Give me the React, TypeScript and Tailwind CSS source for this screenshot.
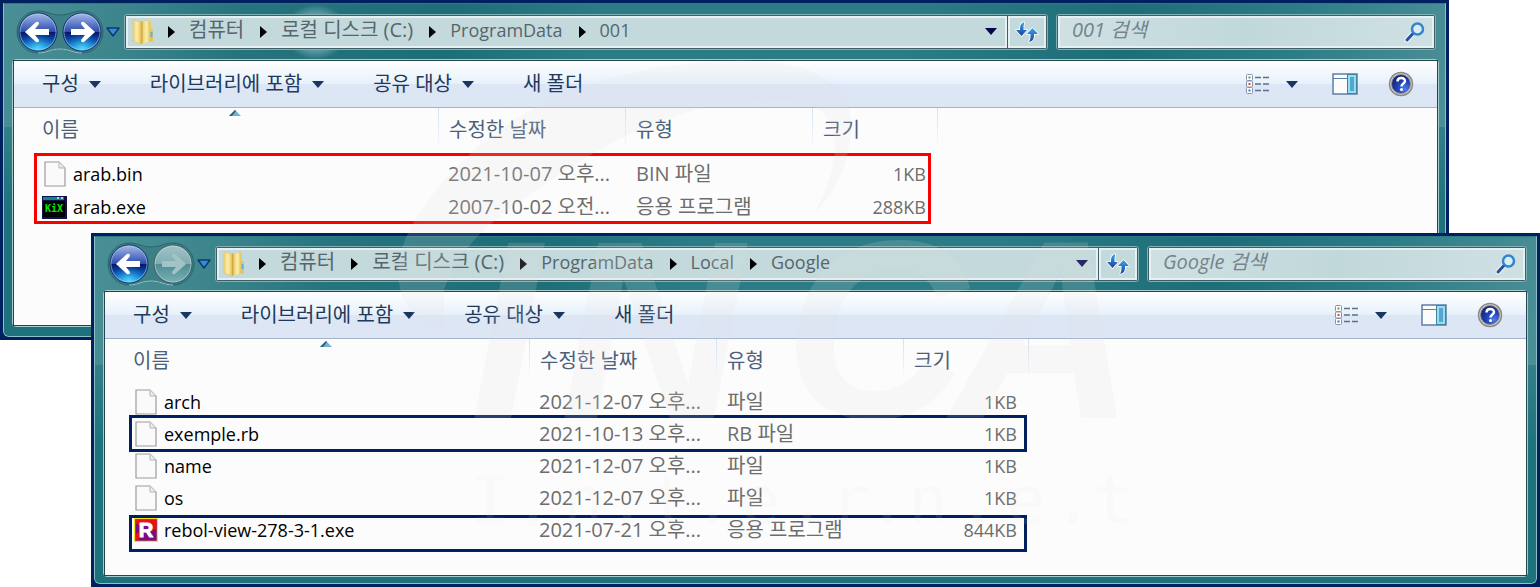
import { Fragment, useId } from "react";

type FileKind = "file" | "kix" | "rebol";

interface FileRow {
  name: string;
  date: string;
  type: string;
  size: string;
  kind: FileKind;
}

interface ExplorerProps {
  path: string[];
  canForward?: boolean;
  files: FileRow[];
  className: string;
  headerClass: string;
  headClass: string;
  rowClass: string;
  bottomClass: string;
  marks: string[];
}

const KOREAN = /[\uac00-\ud7a3]/;

const programFiles: FileRow[] = [
  { name: "arab.bin", date: "2021-10-07 오후...", type: "BIN 파일", size: "1KB", kind: "file" },
  { name: "arab.exe", date: "2007-10-02 오전...", type: "응용 프로그램", size: "288KB", kind: "kix" },
];

const googleFiles: FileRow[] = [
  { name: "arch", date: "2021-12-07 오후...", type: "파일", size: "1KB", kind: "file" },
  { name: "exemple.rb", date: "2021-10-13 오후...", type: "RB 파일", size: "1KB", kind: "file" },
  { name: "name", date: "2021-12-07 오후...", type: "파일", size: "1KB", kind: "file" },
  { name: "os", date: "2021-12-07 오후...", type: "파일", size: "1KB", kind: "file" },
  { name: "rebol-view-278-3-1.exe", date: "2021-07-21 오후...", type: "응용 프로그램", size: "844KB", kind: "rebol" },
];

function Triangle({ className = "text-[#1a3560]" }: { className?: string }) {
  return (
    <svg width="12" height="7" viewBox="0 0 12 7" className={className}>
      <path d="M0 0h12L6 7z" fill="currentColor" />
    </svg>
  );
}

function NavButtons({ canForward }: { canForward: boolean }) {
  const id = useId();
  const ball = `url(#${id}ball)`;
  const glow = `url(#${id}glow)`;
  const grey = `url(#${id}grey)`;
  const arrow = "M-13 0 L-2 -10 Q1 -11 1 -8 L-3 -3 H11 V3 H-3 L1 8 Q1 11 -2 10 Z";
  return (
    <div className="relative h-11 w-[88px] shrink-0">
      <svg width="88" height="44" viewBox="0 0 88 44" className="absolute inset-0">
        <defs>
          <linearGradient id={`${id}ball`} x1="0" y1="0" x2="0" y2="1">
            <stop offset="0" stopColor="#a9bce8" />
            <stop offset="0.3" stopColor="#5a78c8" />
            <stop offset="0.5" stopColor="#2c4ba8" />
            <stop offset="0.51" stopColor="#04186c" />
            <stop offset="0.75" stopColor="#0b55b4" />
            <stop offset="1" stopColor="#22c0f4" />
          </linearGradient>
          <radialGradient id={`${id}glow`} cx="0.5" cy="1" r="0.5">
            <stop offset="0" stopColor="#5fe6ff" stopOpacity="0.9" />
            <stop offset="1" stopColor="#1a90e0" stopOpacity="0" />
          </radialGradient>
          <linearGradient id={`${id}grey`} x1="0" y1="0" x2="0" y2="1">
            <stop offset="0" stopColor="#a3c3c7" />
            <stop offset="0.5" stopColor="#7fadb2" />
            <stop offset="0.51" stopColor="#4f8d93" />
            <stop offset="1" stopColor="#79b1b5" />
          </linearGradient>
        </defs>
        <path d="M22 1 C32 1 34 5 44 5 C54 5 56 1 66 1 A21 21 0 0 1 66 43 C56 43 54 39 44 39 C34 39 32 43 22 43 A21 21 0 0 1 22 1z" fill="#3d7f86" stroke="#2b666d" strokeWidth="1" />
        <path d="M22 43 C32 43 34 39 44 39 C54 39 56 43 66 43" fill="none" stroke="#9cc4c8" strokeWidth="1" />
        <g transform="translate(22 22)">
          <circle r="19" fill={ball} stroke="#142c66" strokeWidth="1" />
          <circle r="18" fill={glow} />
          <circle r="18" fill="none" stroke="#b9cdf0" strokeOpacity="0.6" />
          <path d={arrow} fill="#fff" />
        </g>
        <g transform="translate(66 22)">
          <circle r="19" fill={canForward ? ball : grey} stroke={canForward ? "#142c66" : "#36595d"} strokeWidth="1" />
          {canForward && <circle r="18" fill={glow} />}
          <circle r="18" fill="none" stroke={canForward ? "#b9cdf0" : "#c4dadc"} strokeOpacity="0.6" />
          <path d={arrow} transform="scale(-1 1)" fill={canForward ? "#fff" : "#a3c4c7"} />
        </g>
      </svg>
      <div className="relative flex h-full">
        <button aria-label="뒤로" className="flex-1 rounded-full" />
        <button aria-label="앞으로" className="flex-1 rounded-full" disabled={!canForward} />
      </div>
    </div>
  );
}

function FolderIcon() {
  const id = useId();
  return (
    <svg width="22" height="26" viewBox="0 0 22 26" className="shrink-0">
      <defs>
        <linearGradient id={id} x1="0" y1="0" x2="1" y2="0">
          <stop offset="0" stopColor="#edd277" />
          <stop offset="0.5" stopColor="#fbeea9" />
          <stop offset="1" stopColor="#e6c35c" />
        </linearGradient>
      </defs>
      <path d="M9 3 L17 1 L19 3 V22 L9 25z" fill="#e9ca66" />
      <path d="M11 2.5 L18 1.5 V22 L11 25z" fill={`url(#${id})`} />
      <path d="M18 10 h3 v12 l-3 1z" fill="#e6c35c" />
      <rect x="18.5" y="13" width="2" height="5" fill="#5fb0e0" />
      <path d="M1 1 L9 3 V25 L1 22z" fill={`url(#${id})`} stroke="#e2c266" strokeWidth="0.6" />
      <path d="M9 3 L10.5 2 V24 L9 25z" fill="#d5ab42" />
    </svg>
  );
}

function RefreshIcon() {
  const id = useId();
  return (
    <svg width="24" height="24" viewBox="0 0 24 24">
      <defs>
        <linearGradient id={id} x1="0" y1="0" x2="0" y2="1">
          <stop offset="0" stopColor="#35a7e6" />
          <stop offset="1" stopColor="#1d3f9c" />
        </linearGradient>
      </defs>
      <g fill={`url(#${id})`} stroke="#fff" strokeWidth="1.5" paintOrder="stroke" strokeLinejoin="round">
        <path d="M9.5 2 C7 2.5 5 4.5 5 8 V10 H1 L6.5 16 L12 10 H8.5 V8 C8.5 5 9 3.5 9.5 2z" />
        <path d="M14 22 C17 21.5 19 19.5 19 16 V14 H23 L17.5 8 L12 14 H15.5 V16 C15.5 19 15 20.5 14 22z" />
      </g>
    </svg>
  );
}

function SearchIcon() {
  return (
    <svg width="22" height="22" viewBox="0 0 22 22" fill="none" strokeLinecap="round">
      <path d="M9 12.5 L3 19" stroke="#fff" strokeOpacity="0.7" strokeWidth="5" />
      <path d="M9 12.5 L3 19" stroke="#27509f" strokeWidth="3" />
      <circle cx="13.5" cy="8" r="5.5" fill="#d9ecf3" stroke="#3384cf" strokeWidth="2.5" />
    </svg>
  );
}

function ViewIcon() {
  return (
    <svg width="24" height="20" viewBox="0 0 24 20">
      {["#5c9a4c", "#e0402c", "#3f72c8"].map((color, i) => (
        <g key={color} transform={`translate(0 ${i * 6.5})`}>
          <rect x="0.5" y="0.5" width="6" height="6" rx="1" fill="#fff" stroke="#8493ad" />
          <rect x="2.5" y="2.5" width="2" height="2" fill={color} />
          <path d="M9 3.5h6M17 3.5h6" stroke="#5d7089" strokeWidth="1.5" />
        </g>
      ))}
    </svg>
  );
}

function PaneIcon() {
  return (
    <svg width="26" height="22" viewBox="0 0 26 22">
      <rect x="1" y="1" width="24" height="20" fill="#fbfbfb" stroke="#5f7ea6" strokeWidth="1.5" />
      <path d="M1 5.5h14" stroke="#5f7ea6" />
      <rect x="15.5" y="1.5" width="9" height="19" fill="#8fe3ef" stroke="#46809c" />
      <rect x="18" y="4" width="4" height="14" fill="#5aa4d2" />
    </svg>
  );
}

function HelpIcon() {
  const id = useId();
  return (
    <svg width="26" height="26" viewBox="0 0 26 26">
      <defs>
        <radialGradient id={id} cx="0.7" cy="0.75" r="0.75">
          <stop offset="0" stopColor="#4f7de6" />
          <stop offset="0.5" stopColor="#2143bb" />
          <stop offset="1" stopColor="#15267c" />
        </radialGradient>
      </defs>
      <circle cx="13" cy="13" r="11.5" fill="#d4d2cf" stroke="#8b8986" strokeWidth="1.5" />
      <circle cx="13" cy="13" r="9.5" fill={`url(#${id})`} stroke="#8a8a94" />
      <path d="M9.5 10.5 C9.5 6 17 6 17 10 C17 12.5 13.5 12.5 13.5 15.5" fill="none" stroke="#fff" strokeWidth="2.5" />
      <circle cx="13.5" cy="18.5" r="1.5" fill="#fff" />
    </svg>
  );
}

function FileIcon({ kind }: { kind: FileKind }) {
  if (kind === "kix") {
    return (
      <svg width="26" height="24" viewBox="0 0 26 24">
        <rect x="0" y="1" width="25" height="23" fill="#10104a" />
        <rect x="1" y="2" width="21" height="3" fill="#0b8a85" />
        <rect x="15" y="2" width="2" height="2" fill="#b7d4d4" />
        <rect x="19" y="2" width="2" height="2" fill="#b7d4d4" />
        <rect x="1" y="6" width="22" height="16" fill="#000" />
        <text x="12" y="17" textAnchor="middle" fill="#00e800" className="font-['DejaVu_Sans_Mono',monospace] text-[10px] font-bold">
          KiX
        </text>
      </svg>
    );
  }
  if (kind === "rebol") {
    return (
      <svg width="24" height="24" viewBox="0 0 24 24">
        <rect x="0.5" y="0.5" width="23" height="23" fill="#7b0a86" stroke="#f5e400" strokeWidth="1.5" />
        <path d="M1.5 1.5h21v9l-5 3-6-8-4 3-6-3z" fill="#e8101c" />
        <path d="M2 16l3-2v8H2z" fill="#e8101c" />
        <text x="12" y="19" textAnchor="middle" fill="#fff" stroke="#fff" className="font-['Liberation_Sans',sans-serif] text-[20px] font-bold">
          R
        </text>
      </svg>
    );
  }
  return (
    <svg width="22" height="26" viewBox="0 0 22 26">
      <path d="M1 1h14l6 6v18H1z" fill="#fafafa" stroke="#9c9c9c" strokeWidth="1.2" />
      <path d="M15 1v6h6" fill="#ececec" stroke="#b4b4b4" />
    </svg>
  );
}

function AddressBar({ path }: { path: string[] }) {
  return (
    <div className="flex h-9 min-w-0 flex-1 rounded-[3px] border border-[#7fb0b5] bg-[#3f5f64] p-px">
      <div className="flex min-w-0 flex-1 items-center border-2 border-[#e4f0f1] bg-[#c3d9dc] pl-1">
        <FolderIcon />
        <nav aria-label="주소" className="ml-[14px] flex min-w-0 flex-1 items-center">
          {path.map((part) => (
            <Fragment key={part}>
              <svg width="7" height="12" viewBox="0 0 7 12" className="shrink-0">
                <path d="M0 0v12l7-6z" fill="#000" />
              </svg>
              <button
                className={`mr-4 ml-[14px] pb-[3px] leading-7 whitespace-nowrap text-[#56666c] ${KOREAN.test(part) ? "text-[20px]" : "text-[18px]"}`}
              >
                {part}
              </button>
            </Fragment>
          ))}
        </nav>
        <button aria-label="이전 위치" className="px-2">
          <Triangle className="text-[#05054f]" />
        </button>
      </div>
      <button aria-label="새로 고침" className="ml-px flex w-[38px] items-center justify-center border-2 border-[#e4f0f1] bg-[#c3d9dc]">
        <RefreshIcon />
      </button>
    </div>
  );
}

function SearchBox({ folder }: { folder: string }) {
  return (
    <label className="flex h-9 w-[380px] shrink-0 rounded-[3px] border border-[#7fb0b5] bg-[#3f5f64] p-px">
      <span className="flex flex-1 items-center border-2 border-[#e4f0f1] bg-[#c6dbde] bg-linear-to-r from-[#cfe0e3] via-[#c1d8db] to-[#cfe0e3] pr-[6px] pl-3">
        <input
          type="text"
          aria-label={`${folder} 검색`}
          placeholder={`${folder} 검색`}
          className="min-w-0 flex-1 pb-[3px] text-[20px] leading-7 italic outline-none placeholder:text-[#74848a]"
        />
        <SearchIcon />
      </span>
    </label>
  );
}

function Toolbar() {
  return (
    <div className="flex h-[47px] items-center border-b border-[#a3b3cc] bg-linear-to-b from-white from-0% via-[#e7f1fb] via-49% to-[#dce6f5] to-50% pr-[23px] pl-7 text-[20px] text-[#1e395b]">
      {["구성", "라이브러리에 포함", "공유 대상"].map((label) => (
        <button key={label} className="mr-[49px] flex items-center gap-[10px] whitespace-nowrap">
          {label}
          <Triangle />
        </button>
      ))}
      <button className="whitespace-nowrap">새 폴더</button>
      <div className="ml-auto flex items-center">
        <button aria-label="보기 변경">
          <ViewIcon />
        </button>
        <button aria-label="추가 옵션" className="mr-[34px] ml-4">
          <Triangle />
        </button>
        <button aria-label="미리 보기 창" className="mr-[30px]">
          <PaneIcon />
        </button>
        <button aria-label="도움말">
          <HelpIcon />
        </button>
      </div>
    </div>
  );
}

function FileTable({ files, headClass, rowClass, marks }: Pick<ExplorerProps, "files" | "headClass" | "rowClass" | "marks">) {
  return (
    <div className="relative w-[924px]">
      <svg width="12" height="6" viewBox="0 0 12 6" className="absolute top-[2px] left-[215px]">
        <path d="M0 6L6 0l6 6z" fill="#6fb3cf" />
        <path d="M0 6L6 0l1 1-4 5z" fill="#2f5f78" />
      </svg>
      <table className="w-full table-fixed text-left text-[20px] leading-7">
        <thead>
          <tr className={`align-top text-[#4c607a] ${headClass}`}>
            {["이름", "수정한 날짜", "유형", "크기"].map((label, i) => (
              <th key={label} scope="col" className={i === 0 ? "w-[425px] font-normal" : i === 3 ? "w-[125px] font-normal" : "w-[187px] font-normal"}>
                <div className={`flex h-11 items-center ${i === 0 ? "pl-7" : "pl-[10px]"}`}>{label}</div>
              </th>
            ))}
          </tr>
        </thead>
        <tbody>
          {files.map((file) => (
            <tr key={file.name} className={`whitespace-nowrap text-[#6d6d6d] ${rowClass}`}>
              <td className="pl-7">
                <div className="flex items-center gap-[5px] text-[18px] text-black">
                  <span className="flex w-[26px] justify-center">
                    <FileIcon kind={file.kind} />
                  </span>
                  {file.name}
                </div>
              </td>
              <td className="pl-[9px]">{file.date}</td>
              <td className="pl-[10px]">{file.type}</td>
              <td className="pr-3 text-right text-[18px]">{file.size}</td>
            </tr>
          ))}
        </tbody>
      </table>
      {/* column separators fade out below the header */}
      {["left-[424px]", "left-[611px]", "left-[798px]", "left-[923px]"].map((left) => (
        <div key={left} className={`absolute top-0 h-9 w-px bg-linear-to-b from-[#d3e2f3] to-[#f4f8fc] ${left}`} />
      ))}
      {marks.map((mark) => (
        <div key={mark} className={`pointer-events-none absolute border-3 ${mark}`} />
      ))}
    </div>
  );
}

function Explorer({ path, canForward = false, files, className, headerClass, headClass, rowClass, bottomClass, marks }: ExplorerProps) {
  return (
    <section className={`relative col-start-1 row-start-1 self-start border-3 border-[#00205f] bg-[#00205f] ${className}`}>
      <div className="relative overflow-hidden rounded-b-md border border-[#8fc0c4] border-t-[#2b7c86] bg-[linear-gradient(100deg,#4a8f96_0%,#3d858d_8%,#26747d_16%,#1d6e78_30%,#2b7c86_40%,#2b7c86_60%,#1d6e78_75%,#2b7c86_86%,#4a8e96_97%)]">
        {/* the glass turns darker below the shine on the side edges */}
        <div className="absolute inset-0 bg-linear-to-b from-transparent from-37% via-[#1f727c]/50 via-37% to-[#1f727c] to-60%" />
        {canForward && (
          <div className="absolute top-0 left-[280px] h-14 w-[64px] bg-radial from-[#d5e6f6] to-transparent to-70%" />
        )}
        <header className={`relative flex items-center pr-[9px] pl-3 ${headerClass}`}>
          <NavButtons canForward={canForward} />
          <button aria-label="최근 페이지" className="mr-1 ml-[2px]">
            <svg width="14" height="10" viewBox="0 0 14 10" className="block">
              <path d="M1 1h12L7 9z" fill="#2f8fdc" stroke="#0c3a6e" strokeWidth="1.5" strokeLinejoin="round" />
            </svg>
          </button>
          <AddressBar path={path} />
          <div className="w-2 shrink-0" />
          <SearchBox folder={path[path.length - 1]} />
        </header>
        <div className={`relative ${bottomClass}`}>
          <div className="rounded-sm border border-[#a5cdd0]">
            <div className="border border-[#25474c] bg-[#fcfcfc]">
              <Toolbar />
              <FileTable files={files} headClass={headClass} rowClass={rowClass} marks={marks} />
              <div className={canForward ? "h-[102px]" : "h-[29px]"} />
            </div>
          </div>
        </div>
      </div>
    </section>
  );
}

function Watermark() {
  return (
    <svg viewBox="0 0 1540 587" className="pointer-events-none absolute inset-0 h-full w-full" fill="#e1e1e1" fillOpacity="0.16">
      <path d="M444 332 C400 318 390 280 405 240 C425 195 470 145 530 110 C600 72 700 55 770 62 C835 68 862 100 848 152 C842 180 828 200 815 212 C838 170 850 112 800 102 C740 92 650 115 575 165 C510 205 460 240 444 290z" />
      <text y="418" x="470 560 784 952" className="font-['Liberation_Sans',sans-serif] text-[254px] font-bold italic">
        INCA
      </text>
      <text
        y="523"
        x="490 533 583 627 670 713 760 807 850 887 928 977 1026 1073 1113"
        textAnchor="middle"
        fillOpacity="0.1"
        className="font-['DejaVu_Sans_Mono',monospace] text-[66px]"
      >
        I.n.t.e.r.n.e.t
      </text>
    </svg>
  );
}

export default function App() {
  return (
    <main className="relative grid min-w-[1450px] bg-white font-['Open_Sans','Noto_Sans_CJK_KR',sans-serif]">
      <Explorer
        path={["컴퓨터", "로컬 디스크 (C:)", "ProgramData", "001"]}
        canForward
        files={programFiles}
        className="mr-[91px]"
        headerClass="h-[55px]"
        headClass="h-[49px]"
        rowClass="h-[33px]"
        bottomClass="pr-[6px] pb-[9px] pl-2"
        marks={["top-[45px] left-5 h-[71px] w-[897px] border-[#f60000]"]}
      />
      <Explorer
        path={["컴퓨터", "로컬 디스크 (C:)", "ProgramData", "Local", "Google"]}
        files={googleFiles}
        className="mt-[233px] ml-[91px]"
        headerClass="h-[53px]"
        headClass="h-[47px]"
        rowClass="h-8"
        bottomClass="px-2 pb-[6px]"
        marks={[
          "top-[76px] left-6 h-[37px] w-[898px] border-[#00205f]",
          "top-[176px] left-6 h-[37px] w-[898px] border-[#00205f]",
        ]}
      />
      <Watermark />
    </main>
  );
}
